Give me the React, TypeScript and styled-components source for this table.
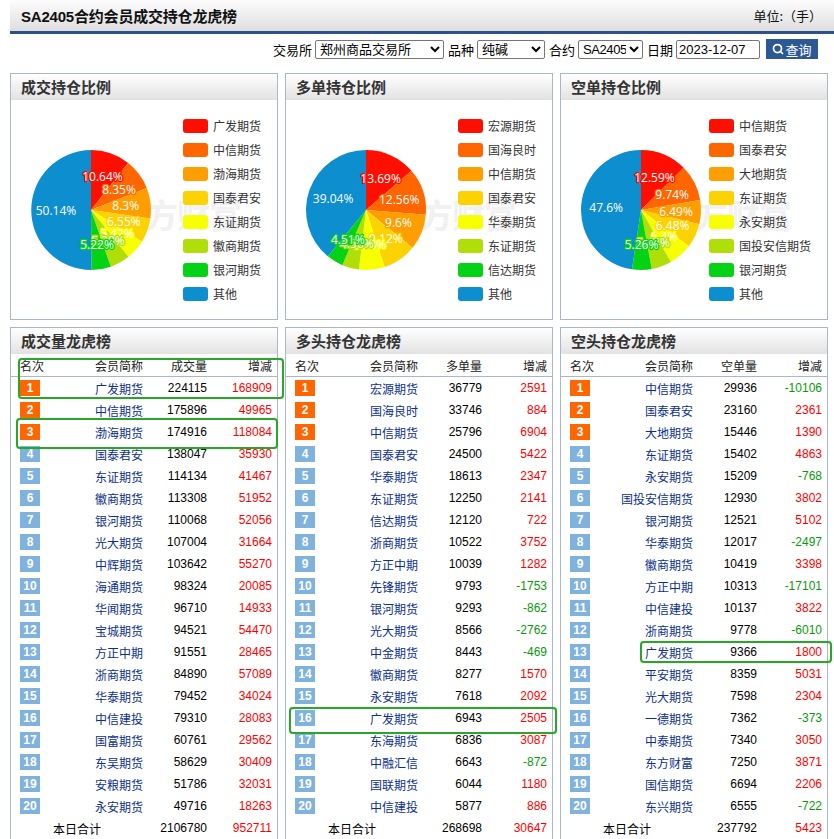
import React from "react";
import styled, { createGlobalStyle } from "styled-components";
import { Search } from "lucide-react";

const GlobalStyle = createGlobalStyle`
  html, body { margin: 0; padding: 0; overflow: hidden; background: #fff; }
  body { font-family: "Liberation Sans", "Noto Sans CJK SC", sans-serif; color: #000; }
`;

const COLORS = ["#FF0F00", "#FF6600", "#FF9E01", "#FCD202", "#F8FF01", "#B0DE09", "#04D215", "#0D8ECF"];

type Slice = { name: string; v: number; label: string };
type Row = [string, number, number];

const pie1: Slice[] = [
  { name: "广发期货", v: 10.64, label: "10.64%" },
  { name: "中信期货", v: 8.35, label: "8.35%" },
  { name: "渤海期货", v: 8.3, label: "8.3%" },
  { name: "国泰君安", v: 6.55, label: "6.55%" },
  { name: "东证期货", v: 5.42, label: "5.42%" },
  { name: "徽商期货", v: 5.38, label: "5.38%" },
  { name: "银河期货", v: 5.22, label: "5.22%" },
  { name: "其他", v: 50.14, label: "50.14%" },
];
const pie2: Slice[] = [
  { name: "宏源期货", v: 13.69, label: "13.69%" },
  { name: "国海良时", v: 12.56, label: "12.56%" },
  { name: "中信期货", v: 9.6, label: "9.6%" },
  { name: "国泰君安", v: 9.12, label: "9.12%" },
  { name: "华泰期货", v: 6.93, label: "6.93%" },
  { name: "东证期货", v: 4.56, label: "4.56%" },
  { name: "信达期货", v: 4.51, label: "4.51%" },
  { name: "其他", v: 39.04, label: "39.04%" },
];
const pie3: Slice[] = [
  { name: "中信期货", v: 12.59, label: "12.59%" },
  { name: "国泰君安", v: 9.74, label: "9.74%" },
  { name: "大地期货", v: 6.49, label: "6.49%" },
  { name: "东证期货", v: 6.48, label: "6.48%" },
  { name: "永安期货", v: 6.4, label: "6.4%" },
  { name: "国投安信期货", v: 5.44, label: "5.44%" },
  { name: "银河期货", v: 5.26, label: "5.26%" },
  { name: "其他", v: 47.6, label: "47.6%" },
];

const t1: Row[] = [
  ["广发期货", 224115, 168909], ["中信期货", 175896, 49965], ["渤海期货", 174916, 118084],
  ["国泰君安", 138047, 35930], ["东证期货", 114134, 41467], ["徽商期货", 113308, 51952],
  ["银河期货", 110068, 52056], ["光大期货", 107004, 31664], ["中辉期货", 103642, 55270],
  ["海通期货", 98324, 20085], ["华闻期货", 96710, 14933], ["宝城期货", 94521, 54470],
  ["方正中期", 91551, 28465], ["浙商期货", 84890, 57089], ["华泰期货", 79452, 34024],
  ["中信建投", 79310, 28083], ["国富期货", 60761, 29562], ["东吴期货", 58629, 30409],
  ["安粮期货", 51786, 32031], ["永安期货", 49716, 18263],
];
const t2: Row[] = [
  ["宏源期货", 36779, 2591], ["国海良时", 33746, 884], ["中信期货", 25796, 6904],
  ["国泰君安", 24500, 5422], ["华泰期货", 18613, 2347], ["东证期货", 12250, 2141],
  ["信达期货", 12120, 722], ["浙商期货", 10522, 3752], ["方正中期", 10039, 1282],
  ["先锋期货", 9793, -1753], ["银河期货", 9293, -862], ["光大期货", 8566, -2762],
  ["中金期货", 8443, -469], ["徽商期货", 8277, 1570], ["永安期货", 7618, 2092],
  ["广发期货", 6943, 2505], ["东海期货", 6836, 3087], ["中融汇信", 6643, -872],
  ["国联期货", 6044, 1180], ["中信建投", 5877, 886],
];
const t3: Row[] = [
  ["中信期货", 29936, -10106], ["国泰君安", 23160, 2361], ["大地期货", 15446, 1390],
  ["东证期货", 15402, 4863], ["永安期货", 15209, -768], ["国投安信期货", 12930, 3802],
  ["银河期货", 12521, 5102], ["华泰期货", 12017, -2497], ["徽商期货", 10419, 3398],
  ["方正中期", 10313, -17101], ["中信建投", 10137, 3822], ["浙商期货", 9778, -6010],
  ["广发期货", 9366, 1800], ["平安期货", 8359, 5031], ["光大期货", 7598, 2304],
  ["一德期货", 7362, -373], ["中泰期货", 7340, 3050], ["东方财富", 7250, 3871],
  ["国信期货", 6694, 2206], ["东兴期货", 6555, -722],
];

const Page = styled.div`
  padding-left: 10px;
  width: 824px;
`;

const TopBar = styled.div`
  height: 31px;
  display: flex;
  align-items: center;
  justify-content: space-between;
  padding: 0 12px 0 11px;
  background: linear-gradient(#fdfdfd, #dedede);
  border-bottom: 3px solid #2f5189;
`;

const Title = styled.h1`
  margin: 0;
  font-size: 15px;
  font-weight: bold;
  color: #111;
  letter-spacing: -0.2px;
`;

const Unit = styled.span`
  font-size: 13px;
  color: #111;
  font-family: "Noto Sans CJK SC", sans-serif;
`;

const Toolbar = styled.div`
  display: flex;
  justify-content: flex-end;
  align-items: center;
  gap: 3px;
  height: 20px;
  margin-top: 5px;
  padding-right: 16px;
  margin-bottom: 14px;
`;

const Label = styled.span`
  font-size: 13px;
  font-family: "Noto Sans CJK SC", sans-serif;
  color: #000;
  margin-left: 1px;
`;

const Select = styled.select<{ $w: number }>`
  width: ${(p) => p.$w}px;
  height: 19px;
  font-size: 13px;
  font-family: "Liberation Sans", "Noto Sans CJK SC", sans-serif;
  border: 1px solid #767676;
  border-radius: 2px;
  padding: 0;
  background: #fff;
  color: #000;
`;

const NarrowSelect = styled(Select)`
  letter-spacing: -0.4px;
`;

const DateInput = styled.input`
  width: 84px;
  height: 19px;
  box-sizing: border-box;
  font-size: 13px;
  font-family: "Liberation Sans", sans-serif;
  border: 1px solid #767676;
  border-radius: 2px;
  padding: 0 2px;
  margin-right: 3px;
`;

const QueryButton = styled.button`
  width: 52px;
  height: 20px;
  display: flex;
  align-items: center;
  justify-content: center;
  gap: 1px;
  padding: 0;
  background: #2d5896;
  border: none;
  color: #fff;
  font-size: 13px;
  font-family: "Noto Sans CJK SC", sans-serif;
`;

const Grid = styled.div`
  display: grid;
  grid-template-columns: repeat(3, 268px);
  column-gap: 7px;
  row-gap: 7px;
`;

const Panel = styled.section`
  position: relative;
  border: 1px solid #a8b8ca;
  background: #fff;
`;

const PanelHeader = styled.div`
  height: 26px;
  line-height: 26px;
  padding-left: 10px;
  background: linear-gradient(#ffffff, #e2e2e2);
  font-size: 15px;
  font-weight: bold;
  color: #333;
  font-family: "Noto Sans CJK SC", sans-serif;
`;

const PieBody = styled.div`
  position: relative;
  height: 219px;
  display: flex;
  align-items: center;
`;

const Watermark = styled.div`
  position: absolute;
  left: 102px;
  top: 90px;
  font-size: 33px;
  font-weight: bold;
  letter-spacing: -1px;
  color: #f1f1f1;
  font-family: "Noto Sans CJK SC", sans-serif;
  z-index: 0;
  white-space: nowrap;
`;

const PieSvg = styled.svg`
  position: relative;
  z-index: 1;
  flex: none;
`;

const Legend = styled.ul`
  position: relative;
  z-index: 1;
  list-style: none;
  margin: 0 16px 0 auto;
  padding: 0;
  flex: none;
  display: flex;
  flex-direction: column;
  gap: 10px;
`;

const LegendItem = styled.li`
  display: flex;
  align-items: center;
  height: 14px;
  font-size: 12px;
  color: #333;
  white-space: nowrap;
  font-family: "Noto Sans CJK SC", sans-serif;
`;

const Swatch = styled.span<{ $c: string }>`
  flex: none;
  width: 25px;
  height: 14px;
  border-radius: 3px;
  background: ${(p) => p.$c};
  margin-right: 5px;
`;

const TableRow = styled.div`
  display: grid;
  grid-template-columns: 40px 83px 64px 65px;
  padding-left: 9px;
  height: 22px;
  align-items: center;
  font-size: 12px;
`;

const HeadRow = styled(TableRow)`
  height: 22px;
  border-bottom: 1px solid #a8b8ca;
  color: #222;
  font-family: "Noto Sans CJK SC", sans-serif;
`;

const HeadCell = styled.span<{ $left?: boolean }>`
  text-align: ${(p) => (p.$left ? "left" : "right")};
`;

const RankCell = styled.span``;

const Badge = styled.span<{ $top: boolean }>`
  display: inline-flex;
  width: 20px;
  height: 16px;
  align-items: center;
  justify-content: center;
  background: ${(p) => (p.$top ? "#ff6600" : "#7fb2dc")};
  color: #fff;
  font-size: 12px;
  font-weight: bold;
  font-family: "Liberation Sans", sans-serif;
`;

const NameCell = styled.span`
  text-align: right;
  color: #0b2f8e;
  font-family: "Noto Sans CJK SC", sans-serif;
  white-space: nowrap;
`;

const NumCell = styled.span`
  text-align: right;
  color: #000;
  font-family: "Liberation Sans", sans-serif;
`;

const ChangeCell = styled.span<{ $neg: boolean }>`
  text-align: right;
  color: ${(p) => (p.$neg ? "#089a08" : "#ff0000")};
  font-family: "Liberation Sans", sans-serif;
`;

const TotalLabel = styled.span`
  grid-column: 1 / 3;
  padding-left: 33px;
  font-family: "Noto Sans CJK SC", sans-serif;
  color: #000;
`;

const TableBody = styled.div`
  padding-bottom: 20px;
`;

const Highlight = styled.div<{ $l: number; $t: number; $w: number; $h: number }>`
  position: absolute;
  left: ${(p) => p.$l}px;
  top: ${(p) => p.$t}px;
  width: ${(p) => p.$w}px;
  height: ${(p) => p.$h}px;
  box-sizing: border-box;
  border: 2px solid #2ea32e;
  border-radius: 4px;
  box-shadow: 0 0 1px #6fcf6f;
  pointer-events: none;
`;

function PieChart({ slices }: { slices: Slice[] }) {
  const cx = 80;
  const cy = 110;
  const r = 60;
  const lr = 35;
  const total = slices.reduce((s, x) => s + x.v, 0);
  let acc = 0;
  const parts = slices.map((s, i) => {
    const a0 = (acc / total) * Math.PI * 2;
    acc += s.v;
    const a1 = (acc / total) * Math.PI * 2;
    const x0 = cx + r * Math.sin(a0);
    const y0 = cy - r * Math.cos(a0);
    const x1 = cx + r * Math.sin(a1);
    const y1 = cy - r * Math.cos(a1);
    const large = a1 - a0 > Math.PI ? 1 : 0;
    const am = (a0 + a1) / 2;
    return {
      d: `M${cx},${cy} L${x0.toFixed(2)},${y0.toFixed(2)} A${r},${r} 0 ${large} 1 ${x1.toFixed(2)},${y1.toFixed(2)} Z`,
      lx: cx + lr * Math.sin(am),
      ly: cy - lr * Math.cos(am),
      color: COLORS[i],
      label: s.label,
    };
  });
  return (
    <PieSvg width={145} height={219} viewBox="0 0 145 219" overflow="visible">
      {parts.map((p, i) => (
        <path key={i} d={p.d} fill={p.color} />
      ))}
      {parts.map((p, i) => (
        <text
          key={i}
          x={p.lx}
          y={p.ly}
          textAnchor="middle"
          dominantBaseline="central"
          fontSize={12}
          fontFamily="'Open Sans', 'Noto Sans', sans-serif"
          fill="#fff"
          stroke={p.color}
          strokeWidth={2.5}
          strokeLinejoin="round"
          paintOrder="stroke"
        >
          {p.label}
        </text>
      ))}
    </PieSvg>
  );
}

function PiePanel({ title, slices }: { title: string; slices: Slice[] }) {
  return (
    <Panel>
      <PanelHeader>{title}</PanelHeader>
      <PieBody>
        <Watermark>东方财富</Watermark>
        <PieChart slices={slices} />
        <Legend>
          {slices.map((s, i) => (
            <LegendItem key={s.name}>
              <Swatch $c={COLORS[i]} />
              {s.name}
            </LegendItem>
          ))}
        </Legend>
      </PieBody>
    </Panel>
  );
}

type Box = { l: number; t: number; w: number; h: number };

function RankPanel({
  title,
  qtyLabel,
  rows,
  total,
  boxes,
}: {
  title: string;
  qtyLabel: string;
  rows: Row[];
  total: [number, number];
  boxes: Box[];
}) {
  return (
    <Panel>
      <PanelHeader>{title}</PanelHeader>
      <HeadRow>
        <HeadCell $left>名次</HeadCell>
        <HeadCell>会员简称</HeadCell>
        <HeadCell>{qtyLabel}</HeadCell>
        <HeadCell>增减</HeadCell>
      </HeadRow>
      <TableBody>
        {rows.map(([name, qty, chg], i) => (
          <TableRow key={i}>
            <RankCell>
              <Badge $top={i < 3}>{i + 1}</Badge>
            </RankCell>
            <NameCell>{name}</NameCell>
            <NumCell>{qty}</NumCell>
            <ChangeCell $neg={chg < 0}>{chg}</ChangeCell>
          </TableRow>
        ))}
        <TableRow>
          <TotalLabel>本日合计</TotalLabel>
          <NumCell>{total[0]}</NumCell>
          <ChangeCell $neg={total[1] < 0}>{total[1]}</ChangeCell>
        </TableRow>
      </TableBody>
      {boxes.map((b, i) => (
        <Highlight key={i} $l={b.l} $t={b.t} $w={b.w} $h={b.h} />
      ))}
    </Panel>
  );
}

export default function App() {
  return (
    <>
      <GlobalStyle />
      <Page>
        <TopBar>
          <Title>SA2405合约会员成交持仓龙虎榜</Title>
          <Unit>单位:（手）</Unit>
        </TopBar>
        <Toolbar>
          <Label>交易所</Label>
          <Select $w={129} defaultValue="czce">
            <option value="czce">郑州商品交易所</option>
          </Select>
          <Label>品种</Label>
          <Select $w={68} defaultValue="sa">
            <option value="sa">纯碱</option>
          </Select>
          <Label>合约</Label>
          <NarrowSelect $w={65} defaultValue="SA2405">
            <option value="SA2405">SA2405</option>
          </NarrowSelect>
          <Label>日期</Label>
          <DateInput defaultValue="2023-12-07" />
          <QueryButton>
            <Search size={12} strokeWidth={3.5} />
            查询
          </QueryButton>
        </Toolbar>
        <Grid>
          <PiePanel title="成交持仓比例" slices={pie1} />
          <PiePanel title="多单持仓比例" slices={pie2} />
          <PiePanel title="空单持仓比例" slices={pie3} />
          <RankPanel
            title="成交量龙虎榜"
            qtyLabel="成交量"
            rows={t1}
            total={[2106780, 952711]}
            boxes={[
              { l: 7, t: 30, w: 266, h: 41 },
              { l: 5, t: 90, w: 262, h: 31 },
            ]}
          />
          <RankPanel
            title="多头持仓龙虎榜"
            qtyLabel="多单量"
            rows={t2}
            total={[268698, 30647]}
            boxes={[{ l: 3, t: 379, w: 268, h: 27 }]}
          />
          <RankPanel
            title="空头持仓龙虎榜"
            qtyLabel="空单量"
            rows={t3}
            total={[237792, 5423]}
            boxes={[{ l: 79, t: 313, w: 192, h: 22 }]}
          />
        </Grid>
      </Page>
    </>
  );
}
